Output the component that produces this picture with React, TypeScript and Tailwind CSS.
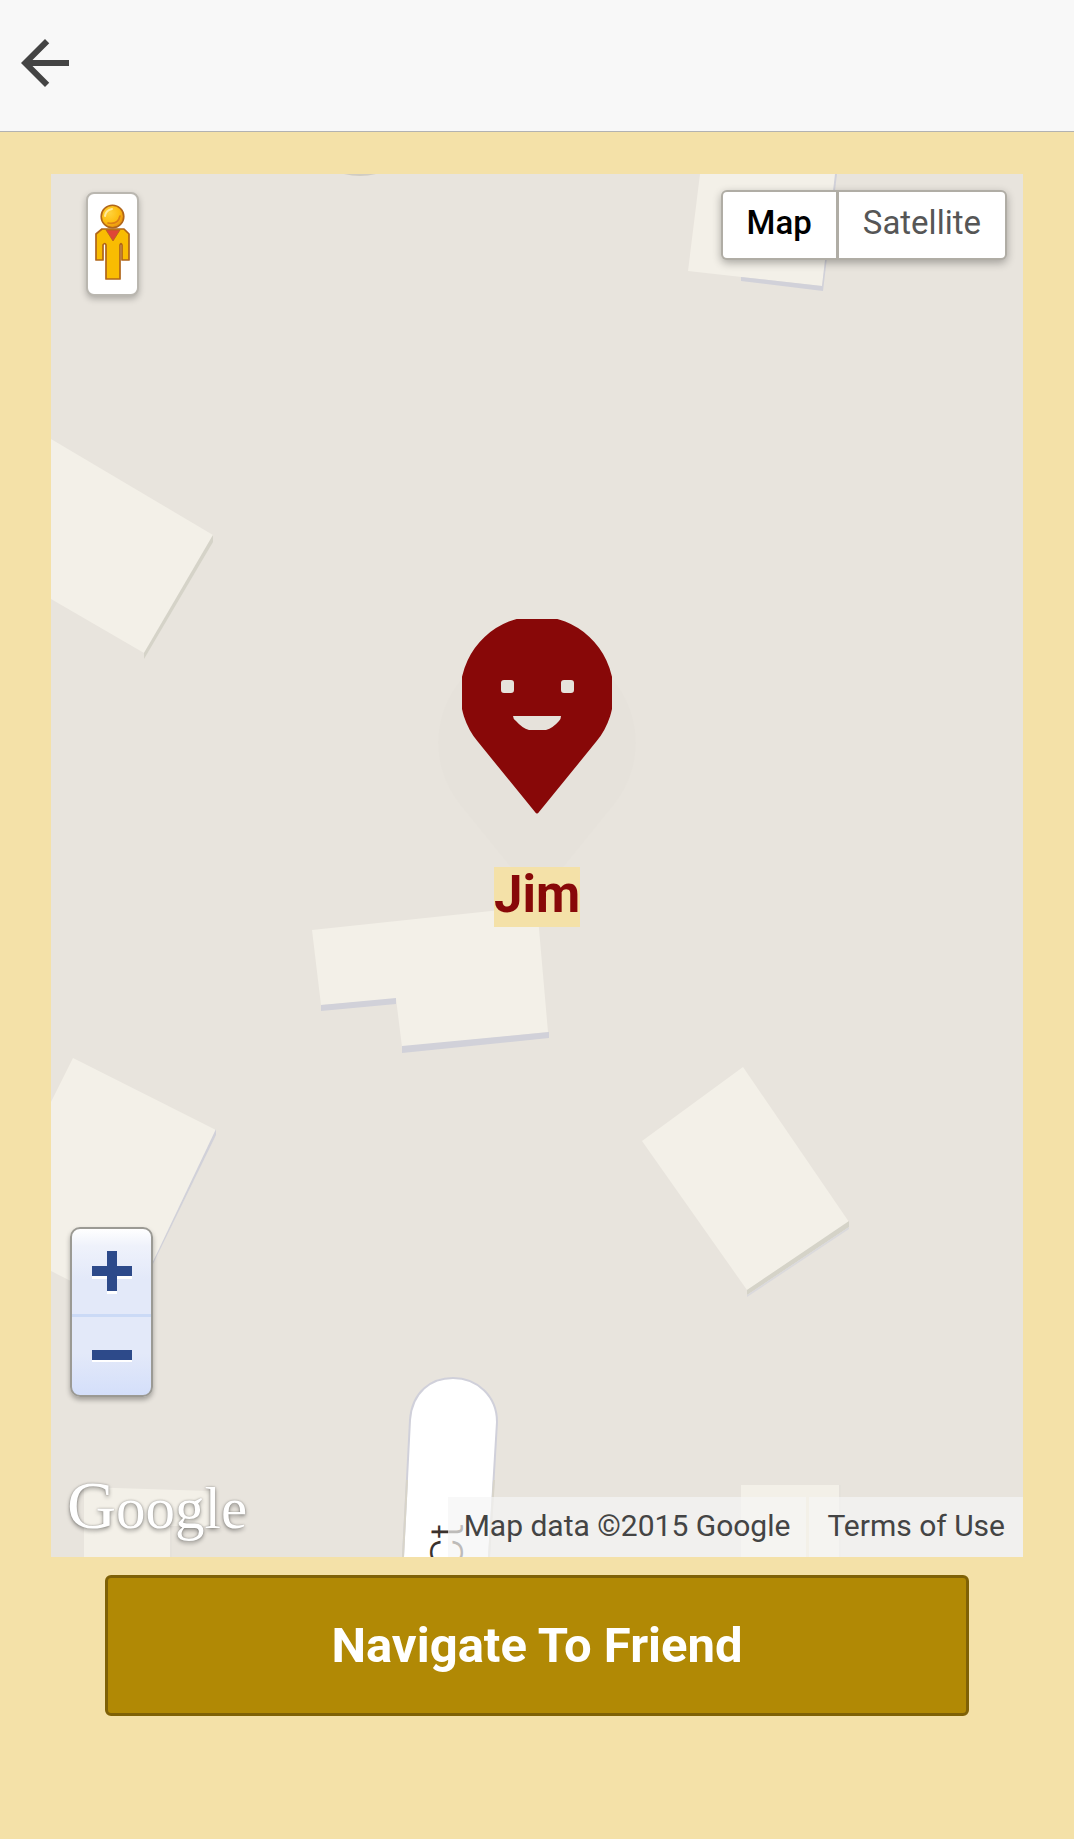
import { useState } from "react";
import { MdArrowBack } from "react-icons/md";

type MapType = "map" | "satellite";

interface FriendPinProps {
	name: string;
}

/**
 * Street and building layer of the map
 */
function MapTiles() {
	return (
		<svg
			viewBox="0 0 972 1383"
			preserveAspectRatio="xMidYMid slice"
			className="absolute inset-0 w-full h-full"
			aria-hidden="true"
		>
			<path d="M293 0Q309 4 325 0Z" fill="#d0ccc2" />

			{/* Buildings */}
			<g fill="#f3f0e8">
				<path d="M649 0L637 97L771 112L785 0Z" />
				<path d="M0 265L162 361L93 479L0 425Z" />
				<path d="M261 756L486 732L497 858L351 873L345 825L270 831Z" />
				<path d="M22 884L165 956L79 1137L0 1097V928Z" />
				<path d="M692 893L798 1048L696 1116L591 967Z" />
				<path d="M33 1313L159 1317V1352H119V1383H33Z" />
				<path d="M690 1311H788V1383H690Z" />
			</g>

			{/* Building edges */}
			<g fill="#d1d1d9">
				<path d="M690 103L771 112L784 0H786L772 117L690 107Z" />
				<path d="M270 831L345 824V830L270 837Z" />
				<path d="M351 872L498 858V864L351 879Z" />
				<path d="M165 955V961L101 1092L98 1096Z" />
			</g>
			<g fill="#d5d3c8">
				<path d="M162 361V368L93 485V479Z" />
				<path d="M798 1047V1053L696 1121V1116Z" />
			</g>
			<path d="M798 1053V1055L696 1123V1121Z" fill="#dad9dc" />
			<path d="M120 1352V1383M789 1311V1383" stroke="#e2dfd9" strokeWidth="1" />

			{/* Cul-de-sac */}
			<path
				d="M352 1383L359 1246C361 1218 380 1204 402 1204C426 1204 446 1222 446 1248L438 1383"
				fill="#ffffff"
				stroke="#d0d0da"
				strokeWidth="2"
			/>
			<path
				d="M352 1383L356 1306M438 1383L443 1306"
				stroke="#d8d4c9"
				strokeWidth="2"
			/>
			<text
				transform="translate(412 1394) rotate(-90)"
				fill="#3b322d"
				fontSize="46"
				className="font-['Roboto',sans-serif] font-light"
			>
				Ct
			</text>
		</svg>
	);
}

function PinShape({ className }: { className: string }) {
	return (
		<svg viewBox="0 0 150 195" className={className} aria-hidden="true">
			<path
				fill="currentColor"
				fillRule="evenodd"
				d="M15.7 122.6A76.7 76.7 0 1 1 134.3 122.6L77 193Q75 196 73 193ZM42 61Q39 61 39 64V71Q39 74 42 74H49Q52 74 52 71V64Q52 61 49 61ZM102 61Q99 61 99 64V71Q99 74 102 74H109Q112 74 112 71V64Q112 61 109 61ZM51 97Q51 100 54 102Q60 109 67 111H84Q91 109 97 102Q99 100 99 97Z"
			/>
		</svg>
	);
}

function FriendPin({ name }: FriendPinProps) {
	return (
		<div className="absolute inset-x-0 top-[445px] flex flex-col items-center">
			<svg
				viewBox="0 0 198 257"
				className="absolute top-6 w-[198px] h-[257px]"
				aria-hidden="true"
			>
				<path
					fill="#000000"
					fillOpacity="0.008"
					d="M22 162A99 99 0 1 1 176 162L99 257Z"
				/>
			</svg>
			<PinShape className="relative w-[150px] h-[195px] text-[#880808]" />
			<span className="relative mt-[53px] pb-1 bg-[#f4e1a8] text-[#880808] text-[51px] leading-14 font-bold">
				{name}
			</span>
		</div>
	);
}

function StreetViewControl() {
	return (
		<button
			type="button"
			aria-label="Street View"
			className="absolute left-[35px] top-[18px] flex justify-center w-[53px] h-[104px] pt-2 rounded-lg border-2 border-[#bab7b0] bg-white shadow-[0_3px_6px_rgba(0,0,0,0.25)]"
		>
			<svg viewBox="0 0 38 80" className="w-[38px] h-20 shrink-0">
				<defs>
					<radialGradient id="pegman-head" cx="0.38" cy="0.35" r="0.7">
						<stop offset="0" stopColor="#ffd23c" />
						<stop offset="0.6" stopColor="#fdbd10" />
						<stop offset="1" stopColor="#e58a10" />
					</radialGradient>
				</defs>
				<path
					d="M8 27H30L35 32V58H28V43Q27 40 26 43V77H12V43Q11 40 9 43V58H2V32Z"
					fill="#f9bc02"
					stroke="#b0651a"
					strokeWidth="1.7"
					strokeLinejoin="round"
				/>
				<path d="M12 28H26L19 39Z" fill="#df4637" stroke="#b0651a" strokeWidth="0.8" />
				<circle
					cx="18.5"
					cy="14.5"
					r="11.3"
					fill="url(#pegman-head)"
					stroke="#b0651a"
					strokeWidth="1.6"
				/>
				<path
					d="M11 14Q12 8 18 7"
					fill="none"
					stroke="#ffeb9c"
					strokeWidth="2"
					strokeLinecap="round"
				/>
				<path
					d="M14 21Q24 23 26 14"
					fill="none"
					stroke="#db7f16"
					strokeWidth="1.7"
					strokeLinecap="round"
				/>
			</svg>
		</button>
	);
}

function MapTypeControl() {
	const [mapType, setMapType] = useState<MapType>("map");
	const options = [
		{ value: "map" as const, label: "Map" },
		{ value: "satellite" as const, label: "Satellite" },
	];

	return (
		<div className="absolute right-4 top-4 flex gap-[3px] p-[2px] rounded-md bg-[#b0ada5] shadow-[0_3px_8px_rgba(0,0,0,0.3)]">
			{options.map((option) => (
				<button
					key={option.value}
					type="button"
					aria-pressed={mapType === option.value}
					onClick={() => setMapType(option.value)}
					className={
						mapType === option.value
							? "px-6 pt-[13px] pb-[17px] bg-white text-black text-[33px] leading-9 font-medium first:rounded-l last:rounded-r"
							: "px-6 pt-[13px] pb-[17px] bg-white text-[#565656] text-[33px] leading-9 first:rounded-l last:rounded-r"
					}
				>
					{option.label}
				</button>
			))}
		</div>
	);
}

function ZoomControl() {
	return (
		<div className="absolute left-[19px] bottom-[160px] flex flex-col w-[83px] rounded-[10px] border-2 border-[#9b9a94] bg-[linear-gradient(#ffffff,#eff2fb_10%,#e3e9f9_30%,#e3e9f9_75%,#d4dffa)] shadow-[0_3px_5px_rgba(0,0,0,0.3)]">
			<button
				type="button"
				aria-label="Zoom in"
				className="flex justify-center items-center h-[88px] border-b-3 border-[#cbdaf6]"
			>
				<svg viewBox="0 0 40 44" className="w-10 h-11">
					<path d="M0 19H40V29H25V44H15V29H0Z" fill="#ffffff" />
					<path d="M15 1H25V16H40V26H25V41H15V26H0V16H15Z" fill="#2d4a8a" />
				</svg>
			</button>
			<button
				type="button"
				aria-label="Zoom out"
				className="flex justify-center items-center h-[78px]"
			>
				<svg viewBox="0 0 40 12" className="w-10 h-3">
					<path d="M0 3H40V12H0Z" fill="#ffffff" />
					<path d="M0 0H40V10H0Z" fill="#2d4a8a" />
				</svg>
			</button>
		</div>
	);
}

function MapFooter() {
	return (
		<>
			<a
				href="#google"
				className="absolute left-4 bottom-0 font-['Liberation_Serif',serif] text-[59px] leading-[98px] text-white [text-shadow:0_2px_4px_rgba(0,0,0,0.4),0_0_2px_rgba(0,0,0,0.3)]"
			>
				<span className="text-[68px]">G</span>oogle
			</a>
			<div className="absolute right-0 bottom-0 flex gap-[3px] text-[30px] leading-[58px] text-[#444444]">
				<span className="px-4 pb-0.5 bg-[#f5f5f5]/70">
					Map data ©2015 Google
				</span>
				<a href="#terms" className="px-[18px] pb-0.5 bg-[#f5f5f5]/70">
					Terms of Use
				</a>
			</div>
		</>
	);
}

export default function App() {
	return (
		<div className="min-h-screen flex flex-col bg-[#f4e1a8] font-['Roboto',sans-serif]">
			<header className="flex px-[9px] pt-[27px] pb-8 bg-[#f8f8f8] border-b border-[#b2b2b2]">
				<button type="button" aria-label="Back" className="text-[#444444]">
					<MdArrowBack className="w-18 h-18" />
				</button>
			</header>

			<main className="flex-1 flex flex-col px-[51px] pt-[42px] pb-[123px]">
				<section
					aria-label="Friend location"
					className="relative flex-1 min-h-[900px] overflow-hidden bg-[#e8e4dd]"
				>
					<MapTiles />
					<FriendPin name="Jim" />
					<StreetViewControl />
					<MapTypeControl />
					<ZoomControl />
					<MapFooter />
				</section>

				<button
					type="button"
					className="mt-[18px] mx-[54px] py-10 rounded-md border-3 border-[#7f6106] bg-[#b18905] text-white text-[49px] leading-[55px] font-bold"
				>
					Navigate To Friend
				</button>
			</main>
		</div>
	);
}
